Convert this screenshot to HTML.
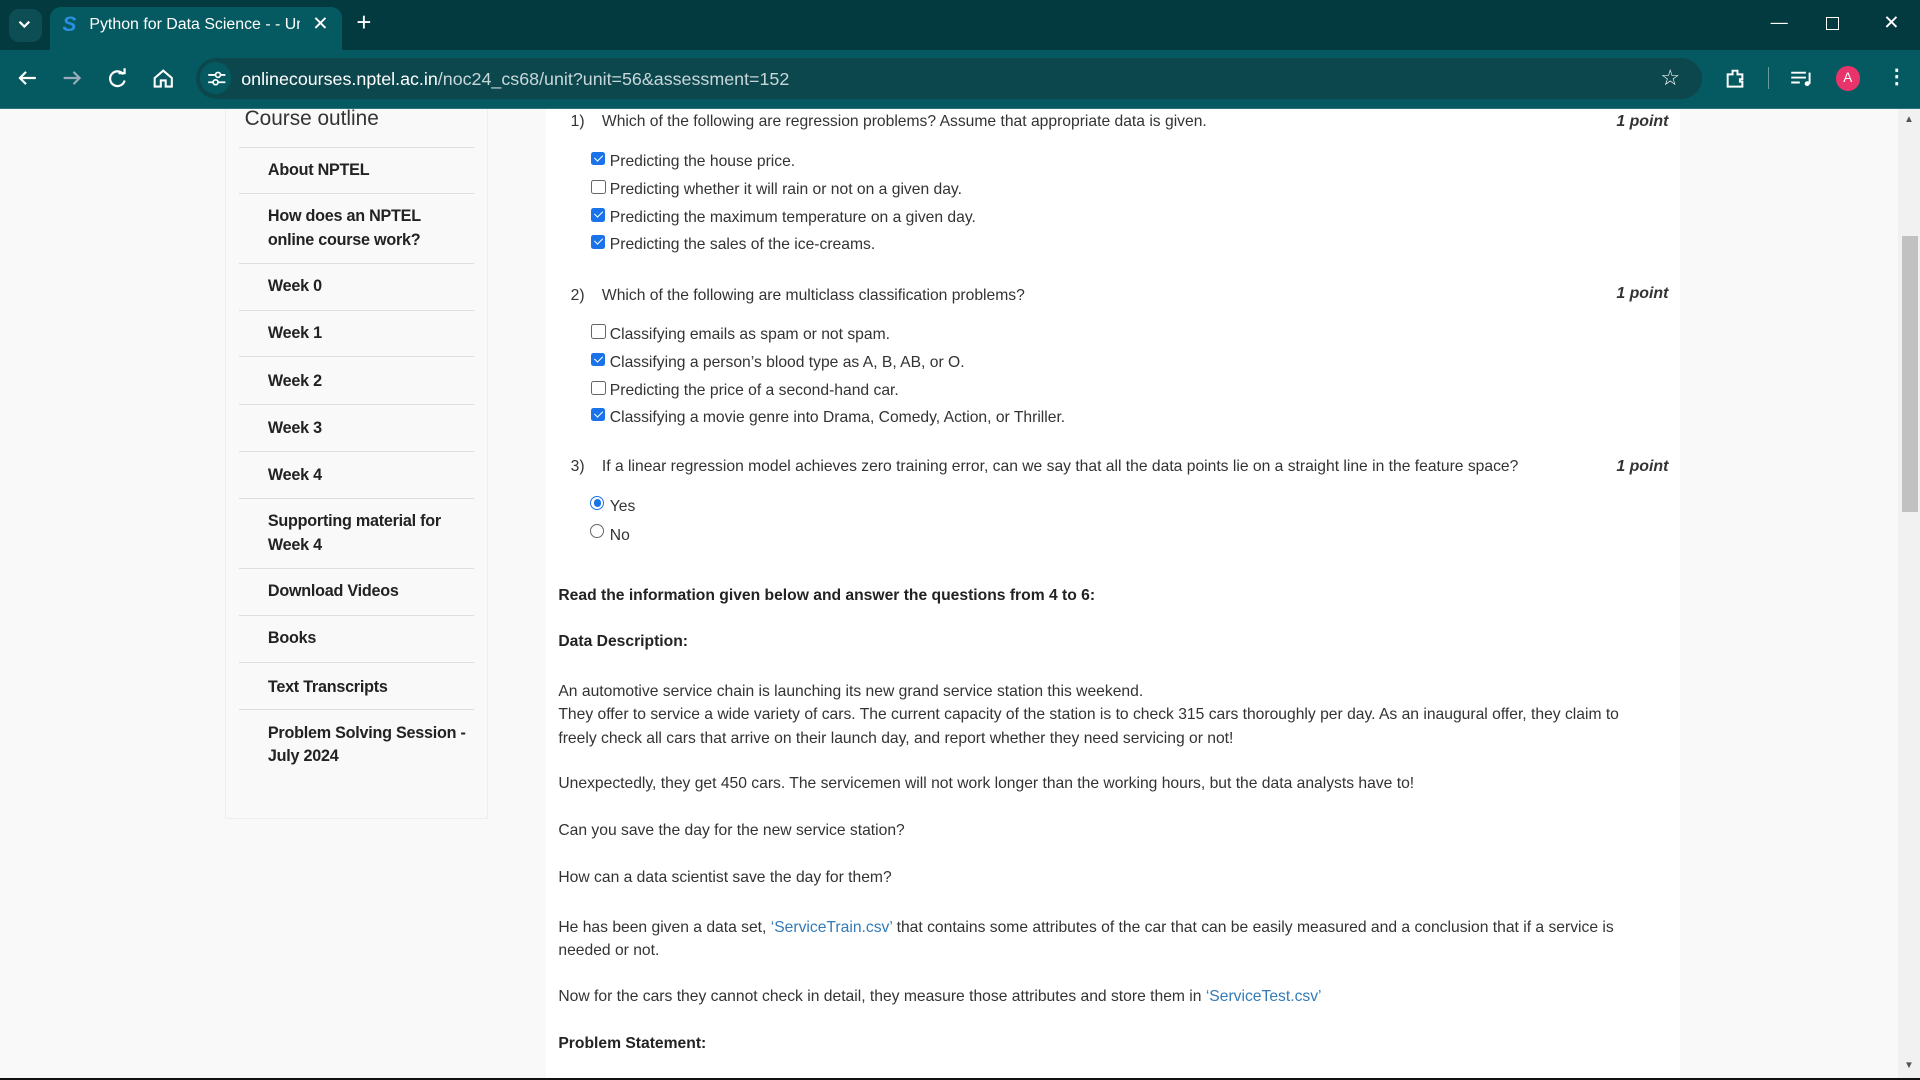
<!DOCTYPE html>
<html><head><meta charset="utf-8"><style>
html,body{margin:0;padding:0;overflow:hidden;background:#f9f9f9}
#w{width:1568px;height:882px;position:relative;zoom:1.22449;font-family:"Liberation Sans",Arial,sans-serif;color:#333;overflow:hidden;background:#f9f9f9}
.a{position:absolute;white-space:nowrap}
.tabs{position:absolute;left:0;top:0;width:1568px;height:41px;background:#023a3f}
.tb{position:absolute;left:0;top:41px;width:1568px;height:47px;background:#045a60;border-bottom:1px solid #2a7378}
.omni{position:absolute;left:160px;top:47px;width:1230px;height:34px;border-radius:17px;background:#0d474e}
.side{position:absolute;left:184px;top:89px;width:213px;height:579px;background:#f9f9f9;border:1px solid #eee;border-top:none}
.si{position:absolute;left:10px;width:192px;border-top:1px solid #ddd;font-weight:bold;font-size:13.2px;color:#222;line-height:19px;letter-spacing:-0.2px}
.si span{display:block;padding-left:24px;white-space:nowrap}
.main{position:absolute;left:446px;top:89px;width:926px;height:793px;background:#fff}
.q{font-size:12.8px;color:#333}
.pt{font-style:italic;font-weight:bold;font-size:13px;color:#333}
.cb{position:absolute;width:11px;height:11px;border-radius:2px;left:483px}
.on{background:#1a73e8}
.on:after{content:"";position:absolute;left:3.5px;top:1px;width:3px;height:6px;border:solid #fff;border-width:0 1.6px 1.6px 0;transform:rotate(45deg)}
.off{border:1px solid #666;width:10px;height:10px;background:#fff}
.b{font-weight:bold;font-size:12.8px;color:#222}
.p{font-size:12.8px;color:#333}
.lk{color:#337ab7}
</style></head><body><div id="w">
<div class="tabs">
 <div class="a" style="left:7px;top:7px;width:27px;height:27px;border-radius:8px;background:#0d4e55"></div>
 <svg class="a" style="left:14px;top:15px" width="12" height="10"><path d="M2 3l4 4 4-4" stroke="#fff" stroke-width="1.8" fill="none"/></svg>
 <div class="a" style="left:41px;top:6px;width:238px;height:35px;background:#045a60;border-radius:9px 9px 0 0"></div>
 <div class="a" style="left:51px;top:11px;font-weight:bold;font-size:17px;color:#2a8fe0;font-style:italic">S</div>
 <div class="a" style="left:73px;top:13px;font-size:13px;color:#fff;width:172px;overflow:hidden">Python for Data Science - - Unit</div>
 <div class="a" style="left:255px;top:10px;font-size:16px;color:#fff">✕</div>
 <div class="a" style="left:291px;top:7px;font-size:21px;color:#fff">+</div>
 <div class="a" style="left:1446px;top:10px;font-size:14px;color:#fff">—</div>
 <div class="a" style="left:1491px;top:14px;width:9px;height:9px;border:1px solid #fff"></div>
 <div class="a" style="left:1538px;top:9px;font-size:16px;color:#fff">✕</div>
</div>
<div class="tb"></div>
<div class="omni"></div>
<svg class="a" style="left:12px;top:55px" width="20" height="18"><path d="M17 9H4M9 4L4 9l5 5" stroke="#fff" stroke-width="1.8" fill="none"/></svg>
<svg class="a" style="left:49px;top:55px" width="20" height="18"><path d="M3 9h13M11 4l5 5-5 5" stroke="#9ab" stroke-width="1.8" fill="none"/></svg>
<svg class="a" style="left:86px;top:55px" width="20" height="18"><path d="M15 6A6 6 0 1 0 16 11" stroke="#fff" stroke-width="1.8" fill="none"/><path d="M11 5h5V1" stroke="#fff" stroke-width="1.8" fill="none"/></svg>
<svg class="a" style="left:123px;top:55px" width="20" height="18"><path d="M3 9l7-6 7 6v7h-5v-5h-4v5H3z" stroke="#fff" stroke-width="1.7" fill="none"/></svg>
<div class="a" style="left:163px;top:51px;width:26px;height:26px;border-radius:13px;background:#045a60"></div>
<svg class="a" style="left:169px;top:57px" width="16" height="14"><path d="M1 4h6M11 4h4M1 10h4M9 10h6" stroke="#fff" stroke-width="1.5"/><circle cx="9" cy="4" r="2" stroke="#fff" fill="none" stroke-width="1.4"/><circle cx="7" cy="10" r="2" stroke="#fff" fill="none" stroke-width="1.4"/></svg>
<div class="a" style="left:197px;top:56px;font-size:14.6px;color:#fff">onlinecourses.nptel.ac.in<span style="color:#c7d7d9">/noc24_cs68/unit?unit=56&amp;assessment=152</span></div>
<div class="a" style="left:1356px;top:53px;font-size:18px;color:#fff">☆</div>
<svg class="a" style="left:1408px;top:55px" width="20" height="18"><path d="M3 6h4V3h4v3h4v4h-2v2h2v4H3z" stroke="#fff" stroke-width="1.6" fill="none"/></svg>
<div class="a" style="left:1444px;top:55px;width:1px;height:18px;background:#6a9a9e"></div>
<svg class="a" style="left:1462px;top:56px" width="20" height="16"><path d="M1 3h12M1 7h12M1 11h7M16 3v9" stroke="#fff" stroke-width="1.6" fill="none"/><circle cx="14" cy="12" r="2" fill="#fff"/></svg>
<div class="a" style="left:1499px;top:54px;width:20px;height:20px;border-radius:10px;background:#e8336b;color:#fff;font-size:11px;text-align:center;line-height:20px">A</div>
<div class="a" style="left:1541px;top:53px;font-size:16px;color:#fff;font-weight:bold">⋮</div>

<div class="side">
 <div class="a" style="left:15px;top:-2px;font-size:17px;color:#333">Course outline</div>
 <div class="si" style="top:31px;height:38px"><span style="padding-top:9px">About NPTEL</span></div>
 <div class="si" style="top:69px;height:57px"><span style="padding-top:9px">How does an NPTEL<br>online course work?</span></div>
 <div class="si" style="top:126px;height:38px"><span style="padding-top:9px">Week 0</span></div>
 <div class="si" style="top:164px;height:38px"><span style="padding-top:9px">Week 1</span></div>
 <div class="si" style="top:202px;height:39px"><span style="padding-top:10px">Week 2</span></div>
 <div class="si" style="top:241px;height:38px"><span style="padding-top:10px">Week 3</span></div>
 <div class="si" style="top:279px;height:39px"><span style="padding-top:10px">Week 4</span></div>
 <div class="si" style="top:318px;height:57px"><span style="padding-top:9px">Supporting material for<br>Week 4</span></div>
 <div class="si" style="top:375px;height:38px"><span style="padding-top:9px">Download Videos</span></div>
 <div class="si" style="top:413px;height:39px"><span style="padding-top:9px">Books</span></div>
 <div class="si" style="top:452px;height:38px"><span style="padding-top:10px">Text Transcripts</span></div>
 <div class="si" style="top:490px;height:57px"><span style="padding-top:10px">Problem Solving Session -<br>July 2024</span></div>
</div>

<div class="main"></div>
<div class="a q" style="left:466px;top:92px">1)&nbsp;&nbsp;&nbsp;&nbsp;Which of the following are regression problems? Assume that appropriate data is given.</div>
<div class="a pt" style="left:1320px;top:92px">1 point</div>
<div class="cb on" style="top:124px"></div><div class="a q" style="left:498px;top:125px">Predicting the house price.</div>
<div class="cb off" style="top:147px"></div><div class="a q" style="left:498px;top:148px">Predicting whether it will rain or not on a given day.</div>
<div class="cb on" style="top:170px"></div><div class="a q" style="left:498px;top:171px">Predicting the maximum temperature on a given day.</div>
<div class="cb on" style="top:192px"></div><div class="a q" style="left:498px;top:193px">Predicting the sales of the ice-creams.</div>

<div class="a q" style="left:466px;top:234px">2)&nbsp;&nbsp;&nbsp;&nbsp;Which of the following are multiclass classification problems?</div>
<div class="a pt" style="left:1320px;top:233px">1 point</div>
<div class="cb off" style="top:265px"></div><div class="a q" style="left:498px;top:266px">Classifying emails as spam or not spam.</div>
<div class="cb on" style="top:288px"></div><div class="a q" style="left:498px;top:289px">Classifying a person’s blood type as A, B, AB, or O.</div>
<div class="cb off" style="top:311px"></div><div class="a q" style="left:498px;top:312px">Predicting the price of a second-hand car.</div>
<div class="cb on" style="top:333px"></div><div class="a q" style="left:498px;top:334px">Classifying a movie genre into Drama, Comedy, Action, or Thriller.</div>

<div class="a q" style="left:466px;top:374px">3)&nbsp;&nbsp;&nbsp;&nbsp;If a linear regression model achieves zero training error, can we say that all the data points lie on a straight line in the feature space?</div>
<div class="a pt" style="left:1320px;top:374px">1 point</div>
<div class="a" style="left:482px;top:405px;width:10px;height:10px;border-radius:50%;border:1px solid #1a73e8;background:#fff"><div style="margin:2px;width:6px;height:6px;border-radius:50%;background:#1a73e8"></div></div>
<div class="a q" style="left:498px;top:407px">Yes</div>
<div class="a" style="left:482px;top:428px;width:10px;height:10px;border-radius:50%;border:1px solid #666;background:#fff"></div>
<div class="a q" style="left:498px;top:430px">No</div>

<div class="a b" style="left:456px;top:479px">Read the information given below and answer the questions from 4 to 6:</div>
<div class="a b" style="left:456px;top:517px">Data Description:</div>
<div class="a p" style="left:456px;top:555px;line-height:19.5px">An automotive service chain is launching its new grand service station this weekend.<br>They offer to service a wide variety of cars. The current capacity of the station is to check 315 cars thoroughly per day. As an inaugural offer, they claim to<br>freely check all cars that arrive on their launch day, and report whether they need servicing or not!</div>
<div class="a p" style="left:456px;top:633px">Unexpectedly, they get 450 cars. The servicemen will not work longer than the working hours, but the data analysts have to!</div>
<div class="a p" style="left:456px;top:671px">Can you save the day for the new service station?</div>
<div class="a p" style="left:456px;top:710px">How can a data scientist save the day for them?</div>
<div class="a p" style="left:456px;top:748px;line-height:19px">He has been given a data set, <span class="lk">‘ServiceTrain.csv’</span> that contains some attributes of the car that can be easily measured and a conclusion that if a service is<br>needed or not.</div>
<div class="a p" style="left:456px;top:807px">Now for the cars they cannot check in detail, they measure those attributes and store them in <span class="lk">‘ServiceTest.csv’</span></div>
<div class="a b" style="left:456px;top:845px">Problem Statement:</div>

<div class="a" style="left:1550px;top:89px;width:18px;height:791px;background:#f1f1f1"></div>
<div class="a" style="left:1553px;top:193px;width:13px;height:225px;background:#c1c1c1"></div>
<div class="a" style="left:1555px;top:93px;font-size:8px;color:#555">▲</div>
<div class="a" style="left:1555px;top:866px;font-size:8px;color:#555">▼</div>
<div class="a" style="left:0;top:880px;width:1568px;height:2px;background:#111"></div>
</div></body></html>
